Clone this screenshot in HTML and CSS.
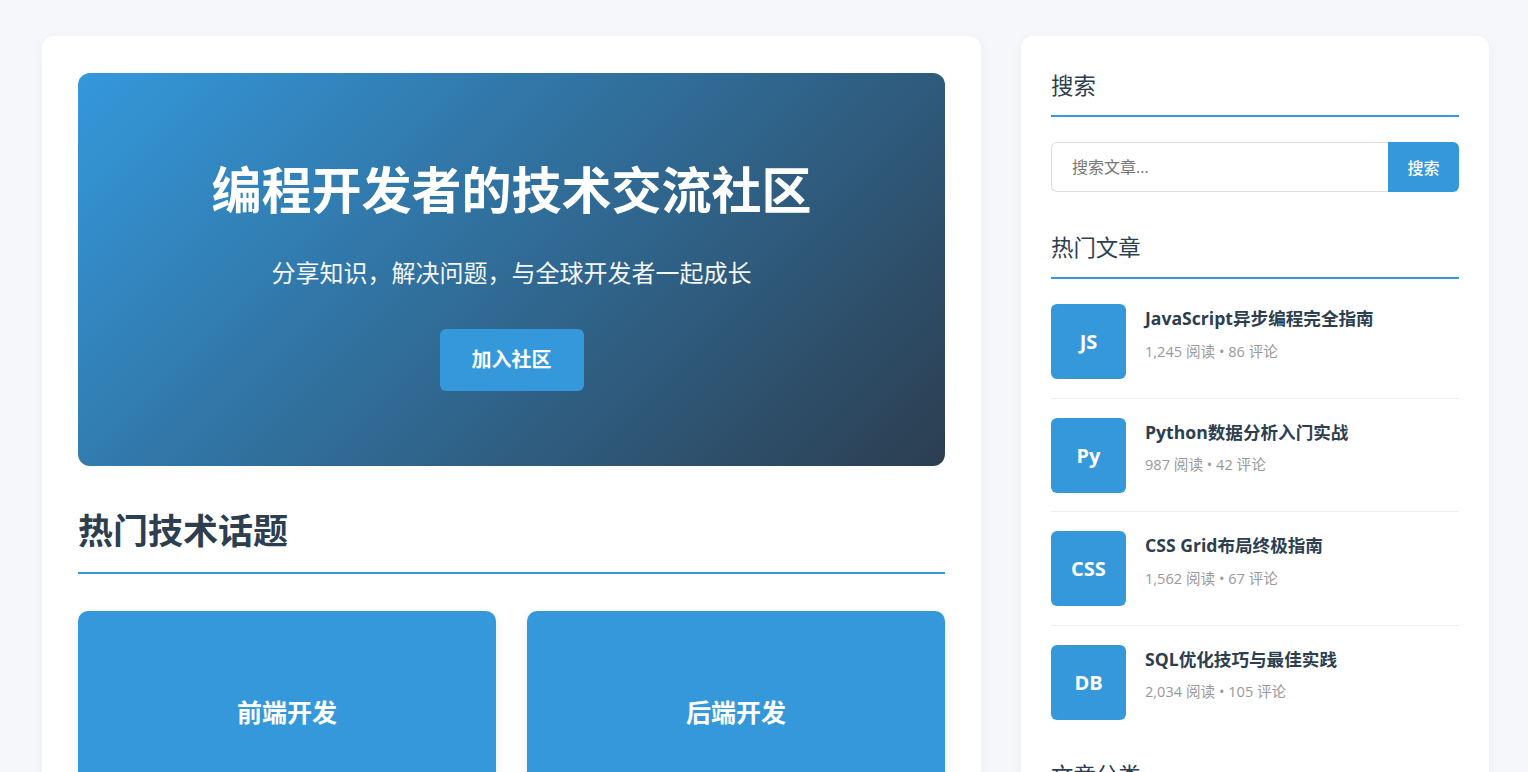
FILE: index.html
```html
<!DOCTYPE html>
<html lang="zh-CN">
<head>
<meta charset="utf-8">
<title>编程开发者的技术交流社区</title>
<link rel="stylesheet" href="styles.css">
</head>
<body>
<div class="layout">
  <main class="main-card">
    <section class="hero">
      <h1 class="hero-title">编程开发者的技术交流社区</h1>
      <p class="hero-sub">分享知识，解决问题，与全球开发者一起成长</p>
      <a class="hero-btn" href="#">加入社区</a>
    </section>

    <h2 class="section-title">热门技术话题</h2>
    <div class="topics">
      <div class="topic">前端开发</div>
      <div class="topic">后端开发</div>
      <div class="topic">移动开发</div>
      <div class="topic">人工智能</div>
    </div>
  </main>

  <aside class="sidebar">
    <div class="widget">
      <h3 class="widget-title">搜索</h3>
      <form class="search">
        <input class="search-input" type="text" placeholder="搜索文章...">
        <button class="search-btn" type="button">搜索</button>
      </form>
    </div>

    <div class="widget">
      <h3 class="widget-title">热门文章</h3>
      <ul class="posts">
        <li class="post">
          <div class="post-icon">JS</div>
          <div class="post-body">
            <div class="post-title">JavaScript异步编程完全指南</div>
            <div class="post-meta">1,245 阅读 • 86 评论</div>
          </div>
        </li>
        <li class="post">
          <div class="post-icon">Py</div>
          <div class="post-body">
            <div class="post-title">Python数据分析入门实战</div>
            <div class="post-meta">987 阅读 • 42 评论</div>
          </div>
        </li>
        <li class="post">
          <div class="post-icon">CSS</div>
          <div class="post-body">
            <div class="post-title">CSS Grid布局终极指南</div>
            <div class="post-meta">1,562 阅读 • 67 评论</div>
          </div>
        </li>
        <li class="post">
          <div class="post-icon">DB</div>
          <div class="post-body">
            <div class="post-title">SQL优化技巧与最佳实践</div>
            <div class="post-meta">2,034 阅读 • 105 评论</div>
          </div>
        </li>
      </ul>
    </div>

    <div class="widget">
      <h3 class="widget-title">文章分类</h3>
      <ul class="cats">
        <li>前端开发</li>
        <li>后端开发</li>
        <li>数据库</li>
        <li>人工智能</li>
      </ul>
    </div>
  </aside>
</div>
</body>
</html>
```

FILE: styles.css
```css
html {
  scrollbar-width: none;
}
html::-webkit-scrollbar {
  display: none;
}
* {
  box-sizing: border-box;
}
body {
  margin: 0;
  background: #f5f7fa;
  font-family: "Open Sans", "Noto Sans CJK SC", sans-serif;
  color: #2c3e50;
}
.layout {
  display: grid;
  grid-template-columns: 939px 468px;
  column-gap: 40px;
  align-items: start;
  padding: 36px 0 40px 42px;
}
.main-card {
  background: #fff;
  border-radius: 12px;
  padding: 37px 36px 36px;
  box-shadow: 0 2px 12px rgba(0, 0, 0, 0.04);
}
.hero {
  background: linear-gradient(135deg, #3498db 0%, #2c3e50 100%);
  border-radius: 12px;
  padding: 87px 40px 75px;
  display: flex;
  flex-direction: column;
  align-items: center;
  color: #fff;
  text-align: center;
}
.hero-title {
  margin: 0 0 35px;
  font-size: 50px;
  line-height: 60px;
  font-weight: 700;
}
.hero-sub {
  margin: 0 0 38px;
  font-size: 24px;
  line-height: 36px;
  font-weight: 400;
  opacity: 0.95;
}
.hero-btn {
  display: block;
  height: 62px;
  line-height: 62px;
  padding: 0 32px;
  background: #3498db;
  color: #fff;
  border-radius: 6px;
  font-size: 20px;
  font-weight: 700;
  text-decoration: none;
}
.section-title {
  margin: 44px 0 37px;
  padding-bottom: 20px;
  border-bottom: 2px solid #3498db;
  font-size: 35px;
  line-height: 42px;
  font-weight: 700;
  color: #2c3e50;
}
.topics {
  display: grid;
  grid-template-columns: 1fr 1fr;
  gap: 31px;
}
.topic {
  height: 200px;
  display: flex;
  align-items: center;
  justify-content: center;
  background: #3498db;
  border-radius: 10px;
  color: #fff;
  font-size: 25px;
  font-weight: 700;
  box-shadow: 0 4px 12px rgba(0, 0, 0, 0.08);
}
.sidebar {
  background: #fff;
  border-radius: 12px;
  padding: 30px;
  box-shadow: 0 2px 12px rgba(0, 0, 0, 0.04);
}
.widget {
  margin-bottom: 36px;
}
.widget-title {
  margin: 0 0 25px;
  padding-bottom: 9px;
  border-bottom: 2px solid #3498db;
  font-size: 22.4px;
  line-height: 40px;
  font-weight: 400;
  color: #2c3e50;
}
.search {
  display: flex;
  margin: 0;
}
.search-input {
  flex: 1;
  min-width: 0;
  height: 50px;
  padding: 0 20px;
  border: 1px solid #ddd;
  border-right: none;
  border-radius: 6px 0 0 6px;
  font-family: inherit;
  font-size: 16px;
  color: #2c3e50;
  outline: none;
}
.search-input::placeholder {
  color: #777;
}
.search-btn {
  width: 71px;
  height: 50px;
  border: none;
  border-radius: 0 6px 6px 0;
  background: #3498db;
  color: #fff;
  font-family: inherit;
  font-size: 16px;
  font-weight: 500;
}
.posts,
.cats {
  list-style: none;
  margin: 0;
  padding: 0;
}
.post {
  display: flex;
  align-items: flex-start;
  gap: 19px;
  padding: 18.84px 0;
  border-bottom: 1px solid #eee;
}
.post:first-child {
  padding-top: 0;
}
.post:last-child {
  padding-bottom: 0;
  border-bottom: none;
}
.post-icon {
  flex: 0 0 75px;
  height: 75px;
  display: flex;
  align-items: center;
  justify-content: center;
  background: #3498db;
  border-radius: 6px;
  color: #fff;
  font-size: 20px;
  font-weight: 700;
}
.post-title {
  font-size: 17.6px;
  line-height: 29px;
  font-weight: 700;
  color: #2c3e50;
  margin-bottom: 6.5px;
}
.post-meta {
  font-size: 14.6px;
  line-height: 23px;
  color: #999;
}
.cats li {
  padding: 10px 0;
  border-bottom: 1px solid #eee;
  font-size: 16px;
}
```
